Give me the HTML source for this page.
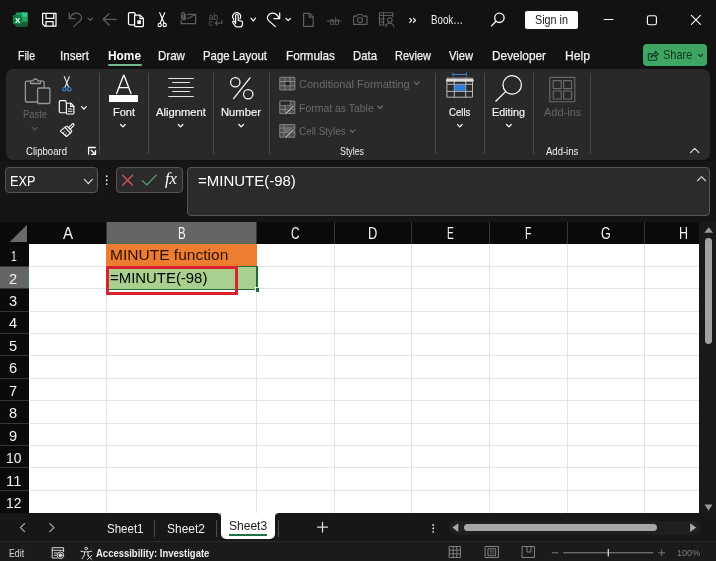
<!DOCTYPE html>
<html lang="en"><head><meta charset="utf-8"><title>Excel - MINUTE function</title>
<style>
html,body{margin:0;padding:0;background:#121212;}
body{width:716px;height:561px;overflow:hidden;position:relative;font-family:"Liberation Sans",sans-serif;}
#app{position:absolute;left:0;top:0;width:716px;height:561px;overflow:hidden;}
#app div{position:absolute;}
.t{position:absolute;white-space:nowrap;line-height:1;transform-origin:0 0;display:block;}
svg.ov{position:absolute;left:0;top:0;will-change:transform;}
#tx{left:0;top:0;width:716px;height:561px;will-change:transform;}
</style></head>
<body><div id="app">
<div style="left:0px;top:0px;width:716px;height:70px;background:#121212;"></div>
<div style="left:0px;top:69px;width:716px;height:93px;background:#121212;"></div>
<div style="left:5.5px;top:69px;width:704px;height:91px;background:#292929;border-radius:7px;"></div>
<div style="left:0px;top:161px;width:716px;height:61px;background:#171514;"></div>
<div style="left:5px;top:167px;width:92.5px;height:26px;background:#2b2b2b;border:1px solid #555555;border-radius:4px;box-sizing:border-box;"></div>
<div style="left:116px;top:167px;width:67px;height:26px;background:#2b2b2b;border:1px solid #555555;border-radius:4px;box-sizing:border-box;"></div>
<div style="left:186.5px;top:167px;width:523.5px;height:49px;background:#2b2b2b;border:1px solid #555555;border-radius:4px;box-sizing:border-box;"></div>
<div style="left:0px;top:221.5px;width:699px;height:22px;background:#0a0a0a;"></div>
<div style="left:0px;top:243.5px;width:28.5px;height:270px;background:#0a0a0a;"></div>
<div style="left:699px;top:221.5px;width:17px;height:292px;background:#191919;"></div>
<div style="left:28.5px;top:243.5px;width:670.5px;height:270px;background:#ffffff;"></div>
<div style="left:106.5px;top:221.5px;width:150px;height:22px;background:#656565;"></div>
<div style="left:0px;top:266px;width:28.5px;height:22.5px;background:#656565;"></div>
<div style="left:27.5px;top:266px;width:1px;height:22.5px;background:#4f7a5f;"></div>
<div style="left:106.5px;top:242.5px;width:150px;height:1px;background:#4f6f5a;"></div>
<div style="left:106.0px;top:243.5px;width:1px;height:270px;background:#e4e4e4;"></div>
<div style="left:106.0px;top:222px;width:1px;height:21.5px;background:#363636;"></div>
<div style="left:256.0px;top:243.5px;width:1px;height:270px;background:#e4e4e4;"></div>
<div style="left:256.0px;top:222px;width:1px;height:21.5px;background:#363636;"></div>
<div style="left:333.5px;top:243.5px;width:1px;height:270px;background:#e4e4e4;"></div>
<div style="left:333.5px;top:222px;width:1px;height:21.5px;background:#363636;"></div>
<div style="left:411.0px;top:243.5px;width:1px;height:270px;background:#e4e4e4;"></div>
<div style="left:411.0px;top:222px;width:1px;height:21.5px;background:#363636;"></div>
<div style="left:489.0px;top:243.5px;width:1px;height:270px;background:#e4e4e4;"></div>
<div style="left:489.0px;top:222px;width:1px;height:21.5px;background:#363636;"></div>
<div style="left:566.5px;top:243.5px;width:1px;height:270px;background:#e4e4e4;"></div>
<div style="left:566.5px;top:222px;width:1px;height:21.5px;background:#363636;"></div>
<div style="left:644.0px;top:243.5px;width:1px;height:270px;background:#e4e4e4;"></div>
<div style="left:644.0px;top:222px;width:1px;height:21.5px;background:#363636;"></div>
<div style="left:28.5px;top:266px;width:670.5px;height:1px;background:#e4e4e4;"></div>
<div style="left:0px;top:266px;width:28.5px;height:1px;background:#363636;"></div>
<div style="left:28.5px;top:288px;width:670.5px;height:1px;background:#e4e4e4;"></div>
<div style="left:0px;top:288px;width:28.5px;height:1px;background:#363636;"></div>
<div style="left:28.5px;top:311px;width:670.5px;height:1px;background:#e4e4e4;"></div>
<div style="left:0px;top:311px;width:28.5px;height:1px;background:#363636;"></div>
<div style="left:28.5px;top:333px;width:670.5px;height:1px;background:#e4e4e4;"></div>
<div style="left:0px;top:333px;width:28.5px;height:1px;background:#363636;"></div>
<div style="left:28.5px;top:355px;width:670.5px;height:1px;background:#e4e4e4;"></div>
<div style="left:0px;top:355px;width:28.5px;height:1px;background:#363636;"></div>
<div style="left:28.5px;top:378px;width:670.5px;height:1px;background:#e4e4e4;"></div>
<div style="left:0px;top:378px;width:28.5px;height:1px;background:#363636;"></div>
<div style="left:28.5px;top:400px;width:670.5px;height:1px;background:#e4e4e4;"></div>
<div style="left:0px;top:400px;width:28.5px;height:1px;background:#363636;"></div>
<div style="left:28.5px;top:423px;width:670.5px;height:1px;background:#e4e4e4;"></div>
<div style="left:0px;top:423px;width:28.5px;height:1px;background:#363636;"></div>
<div style="left:28.5px;top:445px;width:670.5px;height:1px;background:#e4e4e4;"></div>
<div style="left:0px;top:445px;width:28.5px;height:1px;background:#363636;"></div>
<div style="left:28.5px;top:467px;width:670.5px;height:1px;background:#e4e4e4;"></div>
<div style="left:0px;top:467px;width:28.5px;height:1px;background:#363636;"></div>
<div style="left:28.5px;top:490px;width:670.5px;height:1px;background:#e4e4e4;"></div>
<div style="left:0px;top:490px;width:28.5px;height:1px;background:#363636;"></div>
<div style="left:106px;top:244px;width:151px;height:22px;background:#ed7d31;"></div>
<div style="left:106px;top:265.5px;width:151.5px;height:24.3px;background:#1f6b3b;"></div>
<div style="left:107.5px;top:267px;width:148.5px;height:21.6px;background:#a9d08e;"></div>
<div style="left:254.5px;top:287px;width:4.5px;height:4.5px;background:#ffffff;"></div>
<div style="left:255.5px;top:288px;width:3.5px;height:3.5px;background:#1f6b3b;"></div>
<div style="left:105.5px;top:265.5px;width:132.5px;height:29.8px;background:transparent;border:3px solid #d8232f;box-sizing:border-box;"></div>
<div style="left:0px;top:513px;width:716px;height:28.5px;background:#171717;"></div>
<div style="left:0px;top:541.5px;width:716px;height:19.5px;background:#1b1b1b;"></div>
<div style="left:0px;top:541px;width:716px;height:1px;background:#2a2a2a;"></div>
<div style="left:220.5px;top:513px;width:54.7px;height:25.5px;background:#ffffff;border-radius:0 0 5px 5px;"></div>
<div style="left:228.5px;top:534px;width:38px;height:2px;background:#217346;"></div>
<div style="left:154.2px;top:520px;width:1px;height:16.5px;background:#4a4a4a;"></div>
<div style="left:215.7px;top:520px;width:1px;height:16.5px;background:#4a4a4a;"></div>
<div style="left:278.4px;top:520px;width:1px;height:16.5px;background:#4a4a4a;"></div>
<div style="left:448.5px;top:520.7px;width:252.5px;height:14px;background:#1f1f1f;border-radius:7px;"></div>
<div style="left:463.6px;top:523.7px;width:193.3px;height:7.8px;background:#a6a6a6;border-radius:4px;"></div>
<div style="left:705.2px;top:237.5px;width:6.8px;height:106px;background:#a2a2a2;border-radius:3.4px;"></div>
<div style="left:99.0px;top:73px;width:1px;height:81px;background:#484848;"></div>
<div style="left:148.1px;top:73px;width:1px;height:81px;background:#484848;"></div>
<div style="left:213.0px;top:73px;width:1px;height:81px;background:#484848;"></div>
<div style="left:268.5px;top:73px;width:1px;height:81px;background:#484848;"></div>
<div style="left:434.7px;top:73px;width:1px;height:81px;background:#484848;"></div>
<div style="left:484.1px;top:73px;width:1px;height:81px;background:#484848;"></div>
<div style="left:533.3px;top:73px;width:1px;height:81px;background:#484848;"></div>
<div style="left:590.3px;top:73px;width:1px;height:81px;background:#484848;"></div>
<div style="left:107.7px;top:64px;width:34px;height:2.2px;background:#74b88e;border-radius:1px;"></div>
<div style="left:525px;top:11px;width:53px;height:18px;background:#ffffff;border-radius:2px;"></div>
<div style="left:643px;top:43.7px;width:64px;height:22.5px;background:#3ea563;border-radius:4px;"></div>
<div style="left:109px;top:95px;width:29px;height:6.5px;background:#ffffff;"></div>
<svg class="ov" width="716" height="561" viewBox="0 0 716 561" fill="none" stroke-linecap="round" stroke-linejoin="round">
<g id="xl">
<rect x="15.6" y="12.4" width="11.900" height="14.100" rx="1.2" fill="#1d9a5c"/>
<rect x="21.500" y="12.400" width="6" height="4.700" fill="#33c481"/>
<rect x="15.600" y="17.100" width="5.900" height="4.700" fill="#107c41"/>
<rect x="21.500" y="17.100" width="6" height="4.700" fill="#21a366"/>
<path d="M15.600 21.800h11.900v3.500a1.200 1.200 0 0 1-1.200 1.200h-9.500a1.200 1.200 0 0 1-1.200-1.200z" fill="#185c37"/>
<rect x="12.800" y="15" width="9.400" height="9.200" rx="1" fill="#117e43"/>
<text x="17.500" y="22.500" font-family="Liberation Sans, sans-serif" font-weight="bold" font-size="7.800" fill="#fff" text-anchor="middle" stroke="none">X</text>
</g>
<g stroke="#ffffff" stroke-width="1.25"><path d="M42.600 13.300h13.400v12.700h-11.300l-2.100-2.100z"/><path d="M46 13.500v4.900h7.800v-4.900"/><path d="M46 25.800v-4.300h7.100v4.300"/></g>
<g stroke="#5e5e5e" stroke-width="1.25"><path d="M69.3 13v5.700h5.800"/><path d="M69.700 18.300C71.500 14.800 74.500 13 77 13.200C80.200 13.500 82.400 16.500 81.400 19C81 20 80.200 20.800 79.500 21.400L73.700 26.600"/></g>
<path d="M88.0 18.1 L90.2 20.3 L92.4 18.1" stroke="#5e5e5e" stroke-width="1.2"/>
<path d="M116.2 19.3h-12.800M109 13.6l-5.700 5.700l5.700 5.700" stroke="#5e5e5e" stroke-width="1.3"/>
<g stroke="#ffffff" stroke-width="1.25"><path d="M134 24.800h-4.300a1.200 1.200 0 0 1-1.200-1.200v-9.800a1.200 1.200 0 0 1 1.200-1.200h4.200a1.200 1.200 0 0 1 1.200 1.200v1"/><path d="M134.600 15.100h5.500l3.300 3.300v7a1.100 1.100 0 0 1-1.100 1.100h-6.600a1.100 1.100 0 0 1-1.100-1.100z"/><path d="M140 15.300v3.200h3.200"/><rect x="137.300" y="20.300" width="3.600" height="3.600" fill="#ffffff" stroke="none"/></g>
<g stroke="#ffffff" stroke-width="1.150"><path d="M159.700 12.700l4.600 10.800"/><path d="M164.700 12.700l-4.600 10.800"/><circle cx="159.700" cy="24.900" r="1.650"/><circle cx="164.700" cy="24.900" r="1.650"/></g>
<g stroke="#5e5e5e" stroke-width="1.200"><path d="M187.500 14.400h8.100v9.300h-14.500v-3"/><path d="M187.800 18.500l7.600-4"/><path d="M181.600 19v-5a1.400 1.400 0 0 1 2.900 0v5.300a.8.8 0 0 1-1.500 0v-4.300"/><path d="M185.300 19.600v-5.100"/></g>
<text x="208.400" y="19.700" font-family="Liberation Sans, sans-serif" font-size="8.800" fill="#5e5e5e" stroke="none">ab</text>
<text x="208.600" y="26.200" font-family="Liberation Sans, sans-serif" font-size="8.800" fill="#5e5e5e" stroke="none">c</text>
<path d="M221.800 20.600v2.600h-6.500M217.400 21.200l-2.200 2l2.200 2" stroke="#5e5e5e" stroke-width="1.100"/>
<g stroke="#ffffff" stroke-width="1.200"><path d="M235.600 23.500v-7.700a1.300 1.300 0 0 1 2.600 0v4.700l3.200.7a1.500 1.500 0 0 1 1.200 1.700l-.5 2.600a1.800 1.800 0 0 1-1.700 1.400h-3.500a2 2 0 0 1-1.600-.8l-2.600-3.600a1.100 1.100 0 0 1 1.700-1.300z"/><path d="M233.800 19.300a3.900 3.900 0 1 1 6.100-.5"/></g>
<path d="M251.0 18.2 L253.3 20.8 L255.6 18.2" stroke="#ffffff" stroke-width="1.2"/>
<g stroke="#ffffff" stroke-width="1.2"><path d="M279.700 12.900v5.700h-5.800"/><path d="M279.300 18.300C277.500 14.800 274.500 13 272 13.200C268.800 13.500 266.600 16.500 267.600 19C268 20 268.800 20.800 269.500 21.400L275.300 26.600"/></g>
<path d="M286.0 18.3 L288.2 20.7 L290.4 18.3" stroke="#ffffff" stroke-width="1.2"/>
<g stroke="#5e5e5e" stroke-width="1.200"><path d="M303.600 13.300h5.900l3.700 3.700v9.300h-9.600z"/><path d="M309.300 13.500v3.700h3.700"/></g>
<text x="329.500" y="24.800" font-family="Liberation Sans, sans-serif" font-size="10.500" fill="#5e5e5e" stroke="none" textLength="9.800" lengthAdjust="spacingAndGlyphs">ab</text>
<path d="M327.300 21h13.600" stroke="#5e5e5e" stroke-width="1.100"/>
<g stroke="#5e5e5e" stroke-width="1.200"><path d="M353.600 16.200h3l1.200-1.700h4.200l1.200 1.700h3.800v8.200h-13.400z"/><circle cx="360" cy="20" r="2.500"/></g>
<g stroke="#5e5e5e" stroke-width="1.100"><path d="M385 25h-5.500v-12.300h13.300v4"/><path d="M379.500 15.500h13.300M383.500 12.700v12.300M379.500 19h5M379.500 22h4.500"/><circle cx="389.800" cy="20" r="2.300"/><path d="M385.800 27c.4-2.600 2-3.700 4-3.700s3.600 1.100 4 3.700"/></g>
<path d="M409.800 18.400l2 2l-2 2M413.500 18.400l2 2l-2 2" stroke="#ffffff" stroke-width="1.150"/>
<g stroke="#ffffff" stroke-width="1.300"><circle cx="499.400" cy="17.800" r="4.700"/><path d="M496 21.200l-4.500 4.700"/></g>
<path d="M604.200 19.500h8.800" stroke="#ffffff" stroke-width="1.100"/>
<rect x="647.400" y="15.700" width="9" height="9" rx="1.800" stroke="#ffffff" stroke-width="1.100"/>
<path d="M691.400 15.400l9 9M700.400 15.400l-9 9" stroke="#ffffff" stroke-width="1.100"/>
<g stroke="#0f3a20" stroke-width="1.1"><path d="M651.3 53.6h-2a1 1 0 0 0-1 1v4.600a1 1 0 0 0 1 1h6.400a1 1 0 0 0 1-1v-1.400"/><path d="M650.900 57.600c.3-2.600 1.900-4.200 4.300-4.400v-2l3 2.900l-3 2.900v-1.900c-1.800 0-3.200.8-4.300 2.500z"/></g>
<path d="M698.4 54.4 L700.5 56.6 L702.6 54.4" stroke="#0f3a20" stroke-width="1.2"/>
<g stroke="#969696" stroke-width="1.300"><path d="M37.300 102h-10.600a1.300 1.300 0 0 1-1.300-1.300v-18.200a1.300 1.300 0 0 1 1.300-1.300h3.700"/><path d="M40.600 81.200h2.200a1.300 1.300 0 0 1 1.300 1.300v5.300"/><path d="M30.500 83.500v-2.600h2.600a2.400 2.400 0 0 1 4.700 0h2.600v2.600z"/><rect x="37.600" y="88" width="12.300" height="15.500" rx="1" fill="#292929"/></g>
<path d="M32.400 127.500l2.300 2.300l2.300-2.300" stroke="#5a5a5a" stroke-width="1.100"/>
<g stroke-width="1.150"><path d="M64.300 76.600l4.400 10.900M69.300 76.600l-4.400 10.900" stroke="#e8e8e8"/><circle cx="64.300" cy="89.200" r="1.700" stroke="#3583d6"/><circle cx="69.300" cy="89.200" r="1.700" stroke="#3583d6"/></g>
<g stroke="#ffffff" stroke-width="1.150"><path d="M65.800 112.700h-5.400a1.100 1.100 0 0 1-1.100-1.100v-9.900a1.100 1.100 0 0 1 1.100-1.100h4.600a1.100 1.100 0 0 1 1.100 1.100v1.100"/><path d="M66.400 103.200h4.500l3 3v6.700a1.100 1.100 0 0 1-1.100 1.100h-5.300a1.100 1.100 0 0 1-1.100-1.100z"/><path d="M70.700 103.400v3h3"/><path d="M68.300 109h3.700M68.300 111.300h3.700" stroke-width=".9"/></g>
<path d="M81.6 106.7 L83.9 109.2 L86.2 106.7" stroke="#ffffff" stroke-width="1.25"/>
<g stroke="#ffffff" stroke-width="1.100"><path d="M68.600 127.600l3.500-3.500a1.100 1.100 0 0 1 1.600 1.600l-3.500 3.500"/><path d="M64.800 127.400l2.200-1.300l4.800 4.800l-1.300 2.200z"/><path d="M64.800 127.400l-4.500 3.700l6.200 5.400l4-3.400"/><path d="M63 133l1.500-1.300M65 134.700l1.500-1.300" stroke-width=".8"/></g>
<g stroke="#ffffff" stroke-width="1.300"><path d="M95.300 147.500h-6.700v6.700"/><path d="M91.200 150.200l4 4M95.500 150.600v3.800h-3.800"/></g>
<path d="M116.600 93.600l6.900-18.200h.6l6.900 18.200M119.200 87.600h9.200" stroke="#ffffff" stroke-width="1.300" stroke-linejoin="miter"/>
<path d="M120.6 124.5 L122.9 126.9 L125.2 124.5" stroke="#ffffff" stroke-width="1.2"/>
<path d="M168.300 78.500h25.400M172.200 82.500h17.600M168.300 87.500h25.400M172.200 91.500h17.600M168.300 96.500h25.400" stroke="#e4e4e4" stroke-width="1.100" stroke-linecap="butt"/>
<path d="M178.3 124.5 L180.6 126.9 L182.9 124.5" stroke="#ffffff" stroke-width="1.2"/>
<g stroke="#ffffff" stroke-width="1.250"><circle cx="235.300" cy="82.200" r="4.700"/><circle cx="248.200" cy="94.200" r="4.700"/><path d="M250 77.800l-16.400 20.800"/></g>
<path d="M238.9 124.5 L241.2 126.9 L243.5 124.5" stroke="#ffffff" stroke-width="1.2"/>
<g stroke="#858585" stroke-width="1"><rect x="280.2" y="77.3" width="14.6" height="12.6" fill="#4c4c4c"/><path d="M280.2 81.500h14.600M280.2 85.700h14.600M285 77.300v12.600M290 77.300v12.600"/><rect x="285.5" y="82" width="4" height="3.200" fill="#1e1e1e" stroke="none"/></g>
<g stroke="#858585" stroke-width="1"><rect x="280.2" y="101" width="14.6" height="12.600" fill="#4c4c4c"/><path d="M280.2 105.200h14.600M280.2 109.400h14.600M285 101v12.600M290 101v12.600"/><rect x="280.700" y="101.500" width="9" height="3.400" fill="#262626" stroke="none"/><path d="M284.500 113.300l8.500-8.500l1.600 1.600l-8.500 8.500z" fill="#a8a8a8" stroke="#2a2a2a" stroke-width=".8"/></g>
<g stroke="#858585" stroke-width="1"><rect x="280.2" y="124.600" width="14.600" height="12.600" fill="#4c4c4c"/><path d="M280.2 128h14.600M284 124.600v12.600M280.200 132.400h14.600M289.500 128v9"/><rect x="284.500" y="128.500" width="10" height="3.600" fill="#707070" stroke="none"/><path d="M284.500 137l8.500-8.500l1.600 1.600l-8.500 8.500z" fill="#a8a8a8" stroke="#2a2a2a" stroke-width=".8"/></g>
<path d="M414.4 82.0 L416.7 84.5 L419.0 82.0" stroke="#6a6a6a" stroke-width="1.2"/>
<path d="M377.9 106.0 L380.2 108.5 L382.5 106.0" stroke="#6a6a6a" stroke-width="1.2"/>
<path d="M350.3 129.9 L352.6 132.4 L354.9 129.9" stroke="#6a6a6a" stroke-width="1.2"/>
<g stroke="#b8b8b8" stroke-width="1"><rect x="447.3" y="78.2" width="25.2" height="19"/><path d="M447.300 84.300h25.200M447.300 91.400h25.200M454.300 78.200v19M465.700 78.200v19"/><path d="M447.300 80.400h25.200" stroke="#d8d8d8" stroke-width="2.600"/></g>
<rect x="454.800" y="84.800" width="10.400" height="6.100" fill="#2b7fdb"/>
<path d="M453 74.500h13.600M453 72.900v3.200M466.600 72.900v3.200" stroke="#3a84d0" stroke-width="1"/>
<path d="M457.5 124.5 L459.8 126.9 L462.1 124.5" stroke="#ffffff" stroke-width="1.2"/>
<g stroke="#ffffff" stroke-width="1.250"><circle cx="512.200" cy="84.900" r="9.200"/><path d="M505.600 91.600l-9.800 9.600"/></g>
<path d="M506.6 124.5 L508.9 126.9 L511.2 124.5" stroke="#ffffff" stroke-width="1.2"/>
<g stroke="#6a6a6a" stroke-width="1.100"><rect x="549.800" y="77.400" width="25" height="24.300"/><rect x="553.200" y="80.600" width="8" height="8"/><rect x="563.600" y="80.600" width="8" height="8"/><rect x="553.200" y="91" width="8" height="8"/><rect x="563.600" y="91" width="8" height="8"/></g>
<path d="M690.600 152.500l4.100-4.100l4.100 4.100" stroke="#d0d0d0" stroke-width="1.250"/>
<path d="M84.4 179.4 L88.3 183.6 L92.2 179.4" stroke="#e0e0e0" stroke-width="1.2"/>
<g fill="#e8e8e8" stroke="none"><circle cx="106.700" cy="176.300" r=".95"/><circle cx="106.700" cy="180.200" r=".95"/><circle cx="106.700" cy="184.100" r=".95"/></g>
<path d="M122.600 175.200l10 10M132.600 175.200l-10 10" stroke="#d9575f" stroke-width="1.250"/>
<path d="M142.300 180.600l4.500 4.300l9.500-9.800" stroke="#52ad74" stroke-width="1.250"/>
<path d="M697.500 180.700l4-4.100l4 4.100" stroke="#d0d0d0" stroke-width="1.250"/>
<path d="M27 224.800v17.200h-17.200z" fill="#6a6a6a" stroke="none"/>
<path d="M704.300 232.700l4.400-5.500l4.400 5.500z" fill="#9a9a9a" stroke="none"/>
<path d="M704.500 504.600l4 5.800l4-5.800z" fill="#9a9a9a" stroke="none"/>
<path d="M458.300 523.300v8.600l-5.900-4.300z" fill="#aaaaaa" stroke="none"/>
<path d="M690.100 523.300v8.600l6.100-4.300z" fill="#aaaaaa" stroke="none"/>
<g fill="#e8e8e8" stroke="none"><circle cx="433.200" cy="525" r=".9"/><circle cx="433.200" cy="528.400" r=".9"/><circle cx="433.200" cy="531.800" r=".9"/></g>
<path d="M24.600 523.600l-4.200 4l4.200 4" stroke="#b0b0b0" stroke-width="1.200"/>
<path d="M49.800 523.600l4.200 4l-4.200 4" stroke="#b0b0b0" stroke-width="1.200"/>
<path d="M317.600 527.200h9.800M322.500 522.300v9.800" stroke="#e0e0e0" stroke-width="1.200"/>
<path d="M216.500 513h4v4a4 4 0 0 0-4-4z" fill="#fff" stroke="none"/>
<path d="M279.200 513h-4v4a4 4 0 0 1 4-4z" fill="#fff" stroke="none"/>
<g stroke="#d8d8d8" stroke-width="1"><path d="M57 558h-4.800v-10.300h11.400v4"/><path d="M52.200 550.300h11.400M54.300 553h3M54.300 555.300h2"/><circle cx="60.400" cy="555.300" r="3.300" fill="#1b1b1b"/><circle cx="60.400" cy="555.300" r="1.500" fill="#d8d8d8"/></g>
<g stroke="#d8d8d8" stroke-width="1"><circle cx="86.200" cy="548.500" r="1.300"/><path d="M80.800 551.200c3.500 1 7.300 1 10.800 0"/><path d="M84.500 551.800v3l-2.500 4M88 551.800v3l.8 1.200"/><path d="M87.500 555.300l4.400 4.200M91.900 555.300l-4.400 4.200"/></g>
<g stroke="#808080" stroke-width="1"><rect x="449.500" y="546.500" width="11" height="11"/><path d="M449.500 550.200h11M449.500 553.800h11M453.200 546.500v11M456.800 546.500v11"/></g>
<g stroke="#808080" stroke-width="1"><rect x="485.500" y="546.500" width="13" height="11"/><rect x="488.300" y="548.800" width="7.400" height="6.800"/><path d="M490 551h4M490 553.200h4" stroke-width=".8"/></g>
<g stroke="#808080" stroke-width="1"><rect x="522.500" y="546.500" width="12" height="11"/><path d="M527 546.500v5.500h4v-5.500"/></g>
<path d="M552.300 552.800h5.500" stroke="#7a7a7a" stroke-width="1"/>
<path d="M563.600 552.800h89.300" stroke="#8c8c8c" stroke-width="1"/>
<path d="M608.300 549.500v6.600" stroke="#d0d0d0" stroke-width="1.300"/>
<path d="M658.700 552.800h6M661.700 549.800v6" stroke="#787878" stroke-width="1"/>
</svg>
<div id="tx">
<span class="t" style="left:18.00px;top:49.86px;font-size:12.8px;color:#f2f2f2;transform:scaleX(0.824);-webkit-text-stroke:0.25px #f2f2f2;">File</span>
<span class="t" style="left:60.30px;top:49.86px;font-size:12.8px;color:#f2f2f2;transform:scaleX(0.903);-webkit-text-stroke:0.25px #f2f2f2;">Insert</span>
<span class="t" style="left:158.00px;top:49.86px;font-size:12.8px;color:#f2f2f2;transform:scaleX(0.903);-webkit-text-stroke:0.25px #f2f2f2;">Draw</span>
<span class="t" style="left:203.00px;top:49.86px;font-size:12.8px;color:#f2f2f2;transform:scaleX(0.890);-webkit-text-stroke:0.25px #f2f2f2;">Page Layout</span>
<span class="t" style="left:286.00px;top:49.86px;font-size:12.8px;color:#f2f2f2;transform:scaleX(0.918);-webkit-text-stroke:0.25px #f2f2f2;">Formulas</span>
<span class="t" style="left:353.00px;top:49.86px;font-size:12.8px;color:#f2f2f2;transform:scaleX(0.887);-webkit-text-stroke:0.25px #f2f2f2;">Data</span>
<span class="t" style="left:395.00px;top:49.86px;font-size:12.8px;color:#f2f2f2;transform:scaleX(0.857);-webkit-text-stroke:0.25px #f2f2f2;">Review</span>
<span class="t" style="left:449.00px;top:49.86px;font-size:12.8px;color:#f2f2f2;transform:scaleX(0.871);-webkit-text-stroke:0.25px #f2f2f2;">View</span>
<span class="t" style="left:492.00px;top:49.86px;font-size:12.8px;color:#f2f2f2;transform:scaleX(0.926);-webkit-text-stroke:0.25px #f2f2f2;">Developer</span>
<span class="t" style="left:565.00px;top:49.86px;font-size:12.8px;color:#f2f2f2;transform:scaleX(0.950);-webkit-text-stroke:0.25px #f2f2f2;">Help</span>
<span class="t" style="left:108.00px;top:49.86px;font-size:12.8px;color:#ffffff;font-weight:bold;transform:scaleX(0.928);">Home</span>
<span class="t" style="left:662.60px;top:48.86px;font-size:12.8px;color:#0f3a20;transform:scaleX(0.858);">Share</span>
<span class="t" style="left:431.00px;top:13.93px;font-size:12.6px;color:#ededed;transform:scaleX(0.775);">Book…</span>
<span class="t" style="left:535.00px;top:13.93px;font-size:12.6px;color:#1a1a1a;transform:scaleX(0.856);">Sign in</span>
<span class="t" style="left:23.00px;top:109.42px;font-size:11.2px;color:#6a6a6a;transform:scaleX(0.838);">Paste</span>
<span class="t" style="left:113.00px;top:106.51px;font-size:11.8px;color:#f5f5f5;transform:scaleX(0.932);-webkit-text-stroke:0.2px #f5f5f5;">Font</span>
<span class="t" style="left:156.00px;top:106.51px;font-size:11.8px;color:#f5f5f5;transform:scaleX(0.953);-webkit-text-stroke:0.2px #f5f5f5;">Alignment</span>
<span class="t" style="left:221.00px;top:106.51px;font-size:11.8px;color:#f5f5f5;transform:scaleX(0.953);-webkit-text-stroke:0.2px #f5f5f5;">Number</span>
<span class="t" style="left:449.00px;top:106.51px;font-size:11.8px;color:#f5f5f5;transform:scaleX(0.816);-webkit-text-stroke:0.2px #f5f5f5;">Cells</span>
<span class="t" style="left:492.00px;top:106.51px;font-size:11.8px;color:#f5f5f5;transform:scaleX(0.915);-webkit-text-stroke:0.2px #f5f5f5;">Editing</span>
<span class="t" style="left:543.50px;top:106.51px;font-size:11.8px;color:#666666;transform:scaleX(0.932);">Add-ins</span>
<span class="t" style="left:26.00px;top:145.51px;font-size:11.8px;color:#f0f0f0;transform:scaleX(0.812);">Clipboard</span>
<span class="t" style="left:340.00px;top:145.51px;font-size:11.8px;color:#f0f0f0;transform:scaleX(0.747);">Styles</span>
<span class="t" style="left:545.70px;top:145.51px;font-size:11.8px;color:#f0f0f0;transform:scaleX(0.807);">Add-ins</span>
<span class="t" style="left:298.70px;top:78.71px;font-size:11.8px;color:#6a6a6a;transform:scaleX(0.932);">Conditional Formatting</span>
<span class="t" style="left:299.00px;top:102.61px;font-size:11.8px;color:#6a6a6a;transform:scaleX(0.886);">Format as Table</span>
<span class="t" style="left:299.00px;top:126.01px;font-size:11.8px;color:#6a6a6a;transform:scaleX(0.838);">Cell Styles</span>
<span class="t" style="left:10.30px;top:173.85px;font-size:14px;color:#ffffff;transform:scaleX(0.910);">EXP</span>
<span class="t" style="left:198.30px;top:172.75px;font-size:15.3px;color:#ffffff;transform:scaleX(0.980);">=MINUTE(-98)</span>
<span class="t" style="left:165px;top:171.3px;font-size:16px;color:#fff;font-family:'Liberation Serif',serif;font-style:italic;transform:scaleX(1.04);">fx</span>
<span class="t" style="left:62.75px;top:225.91px;font-size:15.7px;color:#f4f4f4;transform:scaleX(0.964);">A</span>
<span class="t" style="left:177.95px;top:225.91px;font-size:15.7px;color:#f4f4f4;transform:scaleX(0.735);">B</span>
<span class="t" style="left:291.25px;top:225.91px;font-size:15.7px;color:#f4f4f4;transform:scaleX(0.759);">C</span>
<span class="t" style="left:368.40px;top:225.91px;font-size:15.7px;color:#f4f4f4;transform:scaleX(0.820);">D</span>
<span class="t" style="left:447.40px;top:225.91px;font-size:15.7px;color:#f4f4f4;transform:scaleX(0.649);">E</span>
<span class="t" style="left:525.30px;top:225.91px;font-size:15.7px;color:#f4f4f4;transform:scaleX(0.678);">F</span>
<span class="t" style="left:601.20px;top:225.91px;font-size:15.7px;color:#f4f4f4;transform:scaleX(0.794);">G</span>
<span class="t" style="left:679.30px;top:225.91px;font-size:15.7px;color:#f4f4f4;transform:scaleX(0.794);">H</span>
<span class="t" style="left:10.60px;top:248.06px;font-size:15.4px;color:#f4f4f4;transform:scaleX(0.677);">1</span>
<span class="t" style="left:9.43px;top:270.51px;font-size:15.4px;color:#f4f4f4;transform:scaleX(0.950);">2</span>
<span class="t" style="left:9.43px;top:292.96px;font-size:15.4px;color:#f4f4f4;transform:scaleX(0.950);">3</span>
<span class="t" style="left:9.43px;top:315.41px;font-size:15.4px;color:#f4f4f4;transform:scaleX(0.950);">4</span>
<span class="t" style="left:9.43px;top:337.86px;font-size:15.4px;color:#f4f4f4;transform:scaleX(0.950);">5</span>
<span class="t" style="left:9.43px;top:360.31px;font-size:15.4px;color:#f4f4f4;transform:scaleX(0.950);">6</span>
<span class="t" style="left:9.43px;top:382.76px;font-size:15.4px;color:#f4f4f4;transform:scaleX(0.950);">7</span>
<span class="t" style="left:9.43px;top:405.21px;font-size:15.4px;color:#f4f4f4;transform:scaleX(0.950);">8</span>
<span class="t" style="left:9.43px;top:427.66px;font-size:15.4px;color:#f4f4f4;transform:scaleX(0.950);">9</span>
<span class="t" style="left:5.90px;top:450.11px;font-size:15.4px;color:#f4f4f4;transform:scaleX(0.899);">10</span>
<span class="t" style="left:5.90px;top:472.56px;font-size:15.4px;color:#f4f4f4;transform:scaleX(0.963);">11</span>
<span class="t" style="left:5.90px;top:495.01px;font-size:15.4px;color:#f4f4f4;transform:scaleX(0.899);">12</span>
<span class="t" style="left:110.00px;top:247.77px;font-size:14.8px;color:#2b1100;transform:scaleX(1.050);">MINUTE function</span>
<span class="t" style="left:110.00px;top:270.77px;font-size:14.8px;color:#000000;transform:scaleX(1.008);">=MINUTE(-98)</span>
<span class="t" style="left:106.80px;top:522.09px;font-size:13.6px;color:#f0f0f0;transform:scaleX(0.847);">Sheet1</span>
<span class="t" style="left:167.00px;top:522.09px;font-size:13.6px;color:#f0f0f0;transform:scaleX(0.882);">Sheet2</span>
<span class="t" style="left:228.50px;top:519.19px;font-size:13.6px;color:#1a1a1a;transform:scaleX(0.884);">Sheet3</span>
<span class="t" style="left:8.80px;top:549.07px;font-size:10.2px;color:#d8d8d8;transform:scaleX(0.859);">Edit</span>
<span class="t" style="left:96.00px;top:548.90px;font-size:10.4px;color:#f0f0f0;font-weight:bold;transform:scaleX(0.913);">Accessibility: Investigate</span>
<span class="t" style="left:677.40px;top:548.30px;font-size:9.8px;color:#7c7c7c;transform:scaleX(0.929);">100%</span>
</div>
</div></body></html>
